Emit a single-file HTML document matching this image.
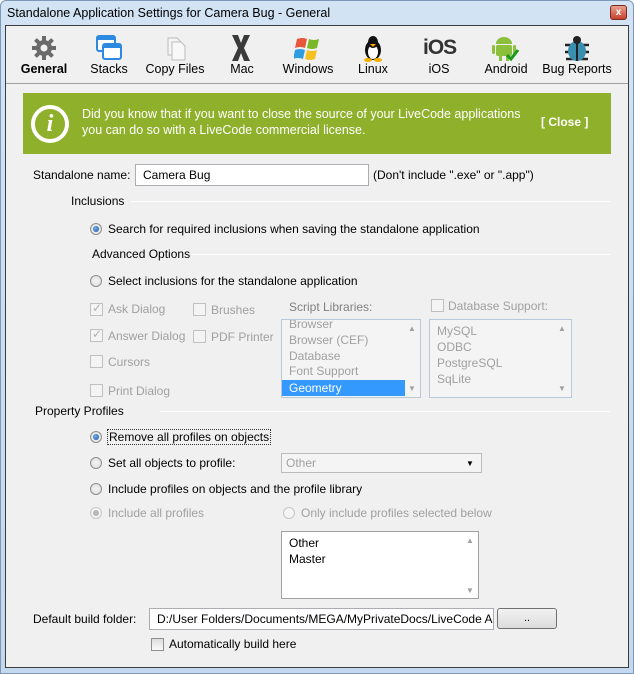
<!DOCTYPE html>
<html><head><meta charset="utf-8"><style>
*{box-sizing:border-box;margin:0;padding:0}
body{width:634px;height:674px;overflow:hidden;background:#fff;font-family:"Liberation Sans",sans-serif;font-size:12px;color:#000;position:relative}
.a{position:absolute;white-space:nowrap;line-height:14px}
.g{color:#a0a0a0}
.ln{position:absolute;height:1px;background:#d5dfe5;border-bottom:1px solid #fff}
.rad{position:absolute;width:12px;height:12px;border-radius:50%;border:1px solid #8e8f8f;background:radial-gradient(circle,#f4f4f4,#dcdcdc)}
.rad.on::after{content:"";position:absolute;left:2px;top:2px;width:6px;height:6px;border-radius:50%;background:radial-gradient(circle at 40% 40%,#6fb2f0,#1a4f8a)}
.rad.dis{border-color:#c6c6c6;background:#f4f4f4}
.rad.dis.on::after{background:#b8b8b8}
.cb{position:absolute;width:13px;height:13px;border:1px solid #c0c0c0;background:#f4f4f4}
.cb.dk{border-color:#8e8f8f;background:linear-gradient(#ddd,#fafafa)}
.cb.chk::after{content:"✓";position:absolute;left:1px;top:-3px;font-size:12px;color:#b0b0b0}
.box{position:absolute;background:#fff;border:1px solid #abadb3}
.ic{position:absolute}
.lb{position:absolute;top:62px;font-size:12.5px;text-align:center;line-height:14px}
</style></head><body>
<div style="position:absolute;left:0;top:0;width:634px;height:674px;background:linear-gradient(#d2e3f4,#c3d8ee);border:1px solid #7f98b5;border-radius:6px 6px 0 0"></div>
<div class="a" style="left:7px;top:6px;font-size:12.5px;color:#000">Standalone Application Settings for Camera Bug - General</div>
<div style="position:absolute;left:610px;top:5px;width:17px;height:15px;background:linear-gradient(#e8a090,#c7412c);border:1px solid #7a2a20;border-radius:3px;color:#fff;font-size:10px;font-weight:bold;text-align:center;line-height:13px">x</div>
<div style="position:absolute;left:5px;top:25px;width:624px;height:643px;background:#f0f0f0;border:1px solid #3c3c3c"></div>

<svg class="ic" style="left:31px;top:35px" width="26" height="26" viewBox="0 0 26 26"><g fill="#6a6a6a"><circle cx="13" cy="13" r="8"/><g stroke="#6a6a6a" stroke-width="4"><line x1="13" y1="1" x2="13" y2="25"/><line x1="1" y1="13" x2="25" y2="13"/><line x1="4.5" y1="4.5" x2="21.5" y2="21.5"/><line x1="21.5" y1="4.5" x2="4.5" y2="21.5"/></g></g><circle cx="13" cy="13" r="3.5" fill="#f0f0f0"/></svg>
<svg class="ic" style="left:96px;top:35px" width="26" height="26"><rect x="1" y="1" width="18" height="15" rx="2" fill="#fff" stroke="#2e8ae0" stroke-width="2"/><rect x="1" y="1" width="18" height="4" fill="#2e8ae0"/><rect x="7" y="9" width="18" height="15" rx="2" fill="#fff" stroke="#2e8ae0" stroke-width="2"/><rect x="7" y="9" width="18" height="4" fill="#2e8ae0"/></svg>
<svg class="ic" style="left:164px;top:35px" width="24" height="26"><path d="M4 3h9l4 4v13H4z" fill="#f4f4f4" stroke="#bdbdbd"/><path d="M8 7h9l4 4v14H8z" fill="#f8f8f8" stroke="#bdbdbd"/></svg>
<svg class="ic" style="left:229px;top:34px" width="24" height="28"><path d="M3 1h6l3 8 3-8h6l-6 13 6 13h-6l-3-8-3 8H3l6-13z" fill="#3a3a3a"/></svg>
<svg class="ic" style="left:294px;top:35px" width="28" height="26"><path d="M3 4q5-2 10 0l-2 9q-5-2-10 0z" fill="#e8563a"/><path d="M15 4q5 2 10 0l-2 9q-5 2-10 0z" fill="#7ab829"/><path d="M1 15q5-2 10 0l-2 9q-5-2-10 0z" fill="#2e9ee0"/><path d="M13 15q5 2 10 0l-2 9q-5 2-10 0z" fill="#f5c023"/></svg>
<svg class="ic" style="left:362px;top:34px" width="22" height="28"><ellipse cx="11" cy="16" rx="8" ry="10" fill="#111"/><ellipse cx="11" cy="18" rx="5" ry="7" fill="#fff"/><ellipse cx="11" cy="8" rx="5" ry="6" fill="#111"/><path d="M8 10l3 3 3-3z" fill="#f5b000"/><ellipse cx="6" cy="26" rx="4" ry="2" fill="#f5b000"/><ellipse cx="16" cy="26" rx="4" ry="2" fill="#f5b000"/></svg>
<div class="a" style="left:423px;top:37px;font-size:21px;line-height:22px;color:#333;font-weight:bold;letter-spacing:-1px">iOS</div>
<svg class="ic" style="left:490px;top:34px" width="30" height="28"><path d="M6 10a8 7 0 0 1 16 0z" fill="#8bbf3c"/><rect x="6" y="11" width="16" height="11" rx="2" fill="#8bbf3c"/><rect x="2" y="11" width="3" height="9" rx="1.5" fill="#8bbf3c"/><rect x="23" y="11" width="3" height="9" rx="1.5" fill="#8bbf3c"/><rect x="9" y="21" width="3" height="6" fill="#8bbf3c"/><rect x="16" y="21" width="3" height="6" fill="#8bbf3c"/><path d="M17 21l4 4 7-9" stroke="#1a9a1a" stroke-width="3" fill="none"/></svg>
<svg class="ic" style="left:563px;top:34px" width="28" height="28"><g stroke="#222" stroke-width="2.5"><line x1="2" y1="11" x2="26" y2="11"/><line x1="2" y1="18" x2="26" y2="18"/><line x1="3" y1="25" x2="25" y2="25"/></g><ellipse cx="14" cy="17" rx="9" ry="10" fill="#3a8fb0"/><circle cx="14" cy="6" r="4" fill="#222"/><line x1="14" y1="8" x2="14" y2="27" stroke="#222" stroke-width="2"/></svg>
<div class="lb" style="left:20px;width:48px;font-weight:bold">General</div>
<div class="lb" style="left:88px;width:42px">Stacks</div>
<div class="lb" style="left:145px;width:60px">Copy Files</div>
<div class="lb" style="left:225px;width:34px">Mac</div>
<div class="lb" style="left:280px;width:56px">Windows</div>
<div class="lb" style="left:353px;width:40px">Linux</div>
<div class="lb" style="left:422px;width:34px">iOS</div>
<div class="lb" style="left:480px;width:52px">Android</div>
<div class="lb" style="left:542px;width:70px">Bug Reports</div>
<div style="position:absolute;left:6px;top:83px;width:622px;height:1px;background:#a0a0a0"></div>

<div style="position:absolute;left:23px;top:93px;width:588px;height:61px;background:#8fb02a"></div>
<div style="position:absolute;left:31px;top:105px;width:38px;height:38px;border:4px solid #fff;border-radius:50%;color:#fff;font:italic bold 24px 'Liberation Serif',serif;text-align:center;line-height:30px">i</div>
<div class="a" style="left:82px;top:106px;color:#fff;line-height:16px;font-size:12.5px">Did you know that if you want to close the source of your LiveCode applications<br>you can do so with a LiveCode commercial license.</div>
<div class="a" style="left:541px;top:115px;color:#fff;font-weight:bold">[ Close ]</div>

<div class="a" style="left:33px;top:168px">Standalone name:</div>
<div class="box" style="left:135px;top:164px;width:234px;height:22px"></div>
<div class="a" style="left:143px;top:168px">Camera Bug</div>
<div class="a" style="left:373px;top:168px">(Don't include ".exe" or ".app")</div>

<div class="a" style="left:71px;top:194px">Inclusions</div>
<div class="ln" style="left:131px;top:201px;width:479px"></div>
<div class="rad on" style="left:90px;top:223px"></div>
<div class="a" style="left:108px;top:222px">Search for required inclusions when saving the standalone application</div>
<div class="a" style="left:92px;top:247px">Advanced Options</div>
<div class="ln" style="left:192px;top:254px;width:418px"></div>
<div class="rad" style="left:90px;top:275px"></div>
<div class="a" style="left:108px;top:274px">Select inclusions for the standalone application</div>

<div class="cb chk" style="left:90px;top:303px"></div><div class="a g" style="left:108px;top:302px">Ask Dialog</div>
<div class="cb" style="left:193px;top:303px"></div><div class="a g" style="left:211px;top:303px">Brushes</div>
<div class="cb chk" style="left:90px;top:329px"></div><div class="a g" style="left:108px;top:329px">Answer Dialog</div>
<div class="cb" style="left:193px;top:330px"></div><div class="a g" style="left:211px;top:330px">PDF Printer</div>
<div class="cb" style="left:90px;top:355px"></div><div class="a g" style="left:108px;top:355px">Cursors</div>
<div class="cb" style="left:90px;top:384px"></div><div class="a g" style="left:108px;top:384px">Print Dialog</div>

<div class="a g" style="left:289px;top:300px;color:#808080">Script Libraries:</div>
<div class="box" style="left:281px;top:319px;width:140px;height:79px;border-color:#b8c8d8;overflow:hidden;background:#f4f4f4">
<div class="a g" style="left:7px;top:-3px">Browser</div>
<div class="a g" style="left:7px;top:13px">Browser (CEF)</div>
<div class="a g" style="left:7px;top:29px">Database</div>
<div class="a g" style="left:7px;top:44px">Font Support</div>
<div style="position:absolute;left:0;top:60px;width:123px;height:16px;background:#3399ff"></div>
<div class="a" style="left:7px;top:61px;color:#fff">Geometry</div>
<div class="a g" style="left:126px;top:2px;font-size:8px">▲</div><div class="a g" style="left:126px;top:62px;font-size:8px">▼</div>
</div>
<div class="cb" style="left:431px;top:299px"></div><div class="a g" style="left:448px;top:299px">Database Support:</div>
<div class="box" style="left:429px;top:319px;width:143px;height:79px;border-color:#b8c8d8;background:#f4f4f4">
<div class="a g" style="left:7px;top:4px">MySQL</div>
<div class="a g" style="left:7px;top:20px">ODBC</div>
<div class="a g" style="left:7px;top:36px">PostgreSQL</div>
<div class="a g" style="left:7px;top:52px">SqLite</div>
<div class="a g" style="left:128px;top:2px;font-size:8px">▲</div><div class="a g" style="left:128px;top:62px;font-size:8px">▼</div>
</div>

<div class="a" style="left:35px;top:404px">Property Profiles</div>
<div class="ln" style="left:160px;top:411px;width:450px"></div>
<div class="rad on" style="left:90px;top:431px"></div>
<div class="a" style="left:107px;top:429px;border:1px dotted #333;padding:0 1px">Remove all profiles on objects</div>
<div class="rad" style="left:90px;top:457px"></div>
<div class="a" style="left:108px;top:456px">Set all objects to profile:</div>
<div class="box" style="left:281px;top:453px;width:201px;height:20px;border-color:#bcbcbc;background:#f4f4f4"></div>
<div class="a g" style="left:286px;top:456px">Other</div>
<div class="a" style="left:466px;top:457px;font-size:8px">▼</div>
<div class="rad" style="left:90px;top:483px"></div>
<div class="a" style="left:108px;top:482px">Include profiles on objects and the profile library</div>
<div class="rad dis on" style="left:90px;top:507px"></div>
<div class="a g" style="left:108px;top:506px">Include all profiles</div>
<div class="rad dis" style="left:283px;top:507px"></div>
<div class="a g" style="left:301px;top:506px">Only include profiles selected below</div>

<div class="box" style="left:281px;top:531px;width:198px;height:68px;border-color:#a0a0a0">
<div class="a" style="left:7px;top:4px">Other</div>
<div class="a" style="left:7px;top:20px">Master</div>
<div class="a g" style="left:184px;top:2px;font-size:8px">▲</div><div class="a g" style="left:184px;top:52px;font-size:8px">▼</div>
</div>

<div class="a" style="left:33px;top:612px">Default build folder:</div>
<div class="box" style="left:149px;top:608px;width:345px;height:22px;overflow:hidden"><div class="a" style="left:7px;top:3px">D:/User Folders/Documents/MEGA/MyPrivateDocs/LiveCode A</div></div>
<div style="position:absolute;left:497px;top:608px;width:60px;height:21px;border:1px solid #707070;border-radius:3px;background:linear-gradient(#f2f2f2,#dcdcdc);text-align:center;font-size:11px;line-height:18px">..</div>
<div class="cb dk" style="left:151px;top:638px"></div>
<div class="a" style="left:169px;top:637px">Automatically build here</div>
</body></html>
